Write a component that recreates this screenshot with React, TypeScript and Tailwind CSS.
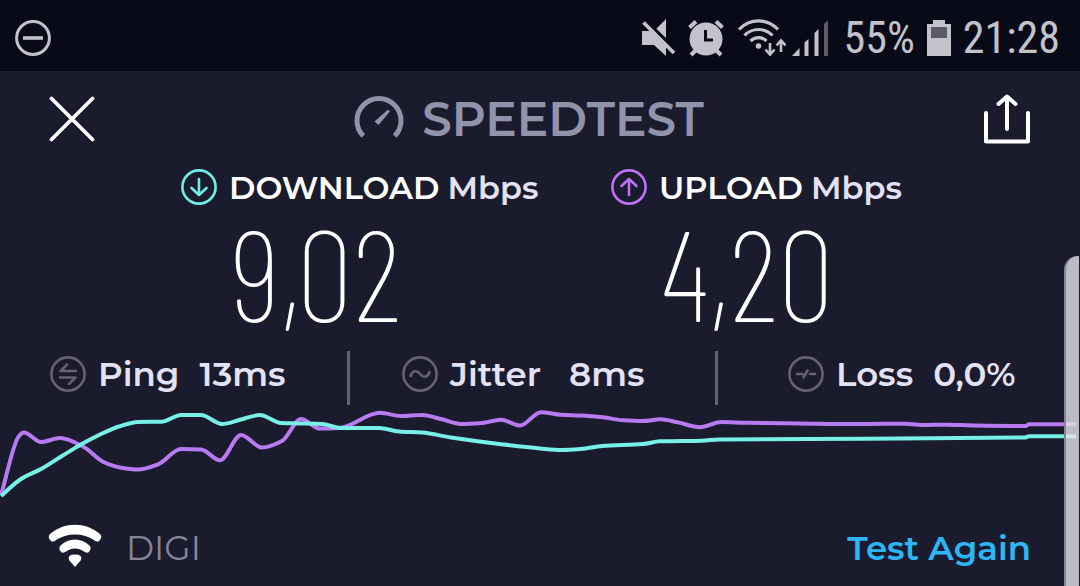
import type { ReactNode } from "react";

type Point = [number, number];

const downloadPoints: Point[] = [
  [1, 92], [21, 75], [41, 65], [62, 52], [81, 40.5], [100, 30.5], [119, 22.5], [138, 18], [162, 17.7],
  [181, 11], [201, 11], [222, 20], [241, 15.5], [260, 11], [281, 19], [300, 19.4], [322, 20], [341, 24],
  [379, 24], [399, 27.5], [422, 28.5], [451, 33.5], [503, 40.5], [540, 44.5], [562, 46], [581, 45],
  [602, 42], [643, 40], [660, 37.3], [702, 36.7], [719, 35.5], [864, 34.8], [1025, 33.5], [1029, 32.2],
  [1076, 32.2],
];

const uploadPoints: Point[] = [
  [1, 91], [19, 32], [24, 28.5], [41, 38], [60, 34], [83, 42.5], [103, 57.7], [120, 63.5], [138, 65.6],
  [158, 60.4], [181, 45], [201, 45.5], [220, 56.3], [241, 31], [262, 43.5], [282, 37], [301, 15],
  [320, 24.6], [339, 24], [380, 8.8], [401, 12], [422, 11], [441, 15], [461, 20], [482, 19], [501, 15.7],
  [520, 21.5], [541, 8.2], [561, 10.8], [581, 11.5], [605, 13.6], [623, 16.3], [643, 17], [660, 15.3],
  [678, 18.4], [700, 23.2], [721, 18], [747, 18.8], [798, 19.4], [857, 20], [884, 19.8], [905, 19.8],
  [926, 21], [946, 20.7], [974, 21.5], [1026, 22], [1029, 20.2], [1076, 20.2],
];

function smoothPath(points: Point[]) {
  const slope = (i: number) => (points[i + 1][1] - points[i][1]) / (points[i + 1][0] - points[i][0]);
  const tangent = (i: number) => {
    if (i === 0) return slope(0);
    if (i === points.length - 1) return slope(i - 1);
    const a = slope(i - 1);
    const b = slope(i);
    return a * b <= 0 ? 0 : (2 * a * b) / (a + b);
  };
  let d = `M${points[0][0]} ${points[0][1]}`;
  for (let i = 0; i < points.length - 1; i++) {
    const [x0, y0] = points[i];
    const [x1, y1] = points[i + 1];
    const h = (x1 - x0) / 3;
    d += ` C${x0 + h} ${y0 + tangent(i) * h} ${x1 - h} ${y1 - tangent(i + 1) * h} ${x1} ${y1}`;
  }
  return d;
}

function RingIcon({ className, children }: { className: string; children: ReactNode }) {
  return (
    <svg viewBox="0 0 36 36" fill="none" stroke="currentColor" strokeWidth="2.6" strokeLinecap="round" strokeLinejoin="round" className={`size-9 shrink-0 ${className}`} aria-hidden="true">
      <circle cx="18" cy="18" r="16.6" />
      {children}
    </svg>
  );
}

function StatusBar() {
  return (
    <div className="flex h-[71px] items-center bg-[#090a17] pt-1 pr-5 pl-[15px] text-[#c3c2cb]">
      <svg viewBox="0 0 36 36" fill="none" stroke="currentColor" strokeWidth="3" className="size-9" aria-label="Do not disturb">
        <circle cx="18" cy="18" r="16.4" />
        <path d="M8 18h20" strokeWidth="3.6" />
      </svg>
      <div className="ml-auto flex items-center">
        <svg viewBox="0 0 34 38" className="mr-3 h-[38px] w-[34px]" fill="currentColor" aria-label="Muted">
          <path d="M0 12h8l16 14v11L12 26H0zM24 0v19L14 10z" />
          <path d="M4 1.500L34 31.500" stroke="#090a17" strokeWidth="3" />
          <path d="M1.500 3.500L32 34" stroke="currentColor" strokeWidth="3.800" />
        </svg>
        <svg viewBox="0 0 36 38" className="mr-3.5 h-[38px] w-9" fill="currentColor" aria-label="Alarm">
          <circle cx="18" cy="20" r="16.5" />
          <path d="M1.500 8.500L8 2.500M34.500 8.500L28 2.500M8 31l-5 5M28 31l5 5" stroke="currentColor" strokeWidth="4" />
          <path d="M17.500 11v10H25" fill="none" stroke="#090a17" strokeWidth="3" />
        </svg>
        <svg viewBox="0 0 48 38" className="mr-1.5 h-[38px] w-12" fill="none" stroke="currentColor" strokeWidth="3.2" aria-label="Wi-Fi">
          <path d="M1 10.500C12-1 29-1 40 10.500M6.500 16.500C14 8.500 27 8.500 34.500 16.500M12.500 22C17 17.500 24 17.500 28.500 22" />
          <circle cx="20.500" cy="27" r="2.800" fill="currentColor" stroke="none" />
          <path d="M32 24v11M27.500 30.500L32 35.500l4.500-5M43 33V22M38.500 26.500L43 21.500l4.500 5" strokeWidth="2.600" />
        </svg>
        <svg viewBox="0 0 36 38" className="mr-4 h-[38px] w-9" fill="currentColor" aria-label="Mobile signal">
          <path d="M0 37L7.500 29V37zM12.500 23.500L16.500 20V37h-4zM22.500 14L26.500 10V37h-4z" />
          <path d="M32 5L36 1V37h-4z" opacity=".45" />
        </svg>
        <span className="mr-3 font-['Roboto_Condensed','Liberation_Sans_Narrow',Roboto,sans-serif] text-[44px] leading-none">55%</span>
        <svg viewBox="0 0 24 38" className="mr-3 h-[38px] w-6" aria-label="Battery">
          <path d="M6 1h12v4h6v32H0V5h6z" fill="currentColor" />
          <path d="M4 8h16v11H4z" fill="#5b5b66" />
        </svg>
        <span className="font-['Roboto_Condensed','Liberation_Sans_Narrow',Roboto,sans-serif] text-[44px] leading-none">21:28</span>
      </div>
    </div>
  );
}

function Result({ label, value, className, icon }: { label: string; value: string; className: string; icon: ReactNode }) {
  return (
    <section className={className}>
      <h2 className="flex h-10 items-center text-[32px] leading-none font-semibold whitespace-nowrap text-white">
        {icon}
        <span className="ml-3 pt-0.5">{label}</span>
        <span className="ml-2 pt-0.5 text-[#e3e2f5]">Mbps</span>
      </h2>
      <p className="flex h-[136px] items-center pb-2 pl-[50px] font-['Saira_Extra_Condensed','Barlow_Condensed','Open_Sans_Condensed_Light','Roboto_Condensed',sans-serif] text-[128px] leading-none font-extralight text-white">{value}</p>
    </section>
  );
}

function Metric({ label, value, className, icon }: { label: string; value: string; className: string; icon: ReactNode }) {
  return (
    <div className={`flex h-[54px] items-center pb-2 whitespace-nowrap ${className}`}>
      {icon}
      <dt className="mr-5 ml-3">{label}</dt>
      <dd>{value}</dd>
    </div>
  );
}

export default function App() {
  return (
    <main className="relative flex min-h-screen flex-col overflow-hidden bg-[#1b1b2e] font-[Montserrat,Inter,sans-serif]">
      <StatusBar />
      <header className="flex h-24 items-center justify-between px-[49px]">
        <button type="button" aria-label="Close" className="text-white">
          <svg viewBox="0 0 46 46" className="size-[46px]" fill="none" stroke="currentColor" strokeWidth="3.800" strokeLinecap="round">
            <path d="M2.500 2.500l41 41M43.500 2.500l-41 41" />
          </svg>
        </button>
        <h1 className="mr-5 flex items-center gap-[18px] text-[47px] leading-none font-semibold text-[#9193aa]">
          <svg viewBox="0 0 50 50" className="size-[50px]" aria-hidden="true">
            <path d="M9.300 44.500A22 22 0 1 1 40.700 44.500" transform="translate(0 -2.500)" fill="none" stroke="currentColor" strokeWidth="5" />
            <path d="M20.500 27.500L33.500 16a1.500 1.500 0 0 1 2 2L24.500 31z" fill="currentColor" />
          </svg>
          SPEEDTEST
        </h1>
        <button type="button" aria-label="Share" className="text-white">
          <svg viewBox="0 0 48 50" className="h-[50px] w-12" fill="none" stroke="currentColor" strokeWidth="4" strokeLinecap="round" strokeLinejoin="round">
            <path d="M3 19v28.500h42V19M24 35V3M15.500 10L24 2.500l8.500 7.500" />
          </svg>
        </button>
      </header>

      <div className="flex justify-center gap-[72px]">
        <Result label="DOWNLOAD" value="9,02" className="w-[358px]" icon={<RingIcon className="text-[#6eeee4]"><path d="M18 10v16M10.500 19l7.500 7 7.500-7" /></RingIcon>} />
        <Result label="UPLOAD" value="4,20" className="w-[288px]" icon={<RingIcon className="text-[#bf71f5]"><path d="M18 26V10M10.500 17l7.500-7 7.500 7" /></RingIcon>} />
      </div>

      <dl className="mt-2 grid grid-cols-[347fr_368fr_365fr] text-[34px] font-semibold text-[#e3e2f5]">
        <Metric label="Ping" value="13ms" className="pl-[50px]" icon={<RingIcon className="text-[#626274]"><path d="M17 8.500L10.500 15H26M10 21.500h15.500L19 28" /></RingIcon>} />
        <Metric label="Jitter" value="8ms" className="border-l-[3px] border-[#626274] pl-[52px] [&>dt]:mr-7" icon={<RingIcon className="text-[#626274]"><path d="M8.500 20c2-6 6.500-6 9.500-2s7.500 4 9.500-2" /></RingIcon>} />
        <Metric label="Loss" value="0,0%" className="border-l-[3px] border-[#626274] pl-[70px]" icon={<RingIcon className="text-[#626274]"><path d="M9 18h5.500M15.500 21.500L19.500 14.500M22 18h5" /></RingIcon>} />
      </dl>

      <svg viewBox="0 1 1080 105" preserveAspectRatio="none" className="h-[105px] w-full" fill="none" strokeWidth="4" strokeLinejoin="round" role="img" aria-label="Download and upload speed over time">
        <path d={smoothPath(uploadPoints)} stroke="#b77af0" />
        <path d={smoothPath(downloadPoints)} stroke="#78f0e6" />
      </svg>

      <footer className="flex h-[76px] items-center justify-between pr-[49px] pl-12 text-[34px] leading-none">
        <div className="flex items-center gap-6 text-[#85859a]">
          <svg viewBox="0 0 54 44" className="mb-1 h-11 w-[54px] text-white" fill="currentColor" aria-hidden="true">
            <path d="M2 10C16-2.500 38-2.500 52 10q3 3-1 7-2.500 1.500-5-1C36 8.500 18 8.500 8 16q-2.500 2.500-5 1-4-4-1-7z" />
            <path d="M12.500 21.500c8-8 21-8 29 0q2.500 3-.5 6.500-2.500 1.500-5-.500c-5.500-4-12.500-4-18 0q-2.500 2-5 .500-3-3.500-.5-6.500z" />
            <path d="M27 43l-6-7q-2-5.500 6-5.500t6 5.500z" />
          </svg>
          <span>DIGI</span>
        </div>
        <button type="button" className="font-semibold text-[#2eb5f5]">Test Again</button>
      </footer>

      <div className="absolute top-64 right-px bottom-0 w-[15px] rounded-tl-[14px] border-l-2 border-[#85858f] bg-[#e4e3e8]/80" />
    </main>
  );
}
